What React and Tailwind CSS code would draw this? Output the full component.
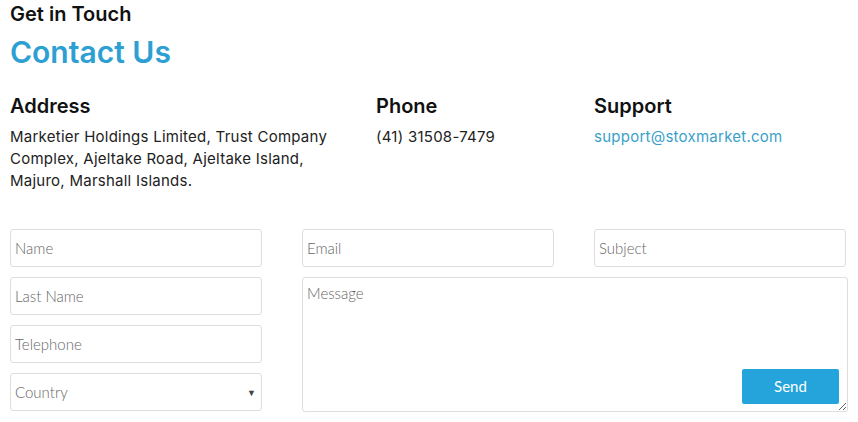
export default function App() {
  const input =
    "w-full h-[38px] border border-[#dedede] rounded-[3px] bg-white px-[4px] text-[15px] font-light text-[#555] placeholder:text-[#666] outline-none"

  return (
    <div className="w-[858px] h-[422px] bg-white px-[10px] font-['Inter',sans-serif] text-[#222]">
      <h3 className="pt-[2px] text-[20px] leading-[24px] font-semibold text-[#111]">Get in Touch</h3>
      <h1 className="mt-[9px] text-[30px] leading-[34px] font-semibold text-[#2d9fd3]">Contact Us</h1>

      {/* Info row */}
      <div className="mt-[24px] grid grid-cols-[366px_218px_1fr]">
        <div>
          <h4 className="text-[20px] leading-[26px] font-semibold text-[#111]">Address</h4>
          <p className="mt-[7px] text-[15px] leading-[22px] tracking-[0.25px] w-[340px]">
            Marketier Holdings Limited, Trust Company Complex, Ajeltake Road, Ajeltake Island, Majuro, Marshall Islands.
          </p>
        </div>
        <div>
          <h4 className="text-[20px] leading-[26px] font-semibold text-[#111]">Phone</h4>
          <p className="mt-[7px] text-[15px] leading-[22px] tracking-[0.25px]">(41) 31508-7479</p>
        </div>
        <div>
          <h4 className="text-[20px] leading-[26px] font-semibold text-[#111]">Support</h4>
          <p className="mt-[7px] text-[15px] leading-[22px] tracking-[0.25px] text-[#3a9fc9]">support@stoxmarket.com</p>
        </div>
      </div>

      {/* Form */}
      <form className="mt-[37px] grid grid-cols-[252px_252px_252px] gap-x-[40px] gap-y-[10px] font-['Lato',sans-serif]">
        <input className={input} placeholder="Name" />
        <input className={input} placeholder="Email" />
        <input className={input} placeholder="Subject" />

        <div className="flex flex-col gap-[10px]">
          <input className={input} placeholder="Last Name" />
          <input className={input} placeholder="Telephone" />
          <div className="relative">
            <select className={`${input} appearance-none text-[#666] pr-6`} defaultValue="">
              <option value="">Country</option>
            </select>
            <span className="absolute right-[6px] top-[13px] text-[9px] text-[#444] pointer-events-none">▼</span>
          </div>
        </div>

        <div className="col-span-2 relative w-[546px]">
          <textarea
            className="w-full h-[135px] border border-[#dedede] rounded-[3px] bg-white px-[4px] pt-[4px] text-[15px] font-light text-[#555] placeholder:text-[#666] outline-none resize-y block"
            placeholder="Message"
          />
          <button
            type="button"
            className="absolute right-[9px] bottom-[8px] w-[97px] h-[35px] rounded-[2px] bg-[#25a4dc] text-white text-[15px]"
          >
            Send
          </button>
        </div>
      </form>
    </div>
  )
}
